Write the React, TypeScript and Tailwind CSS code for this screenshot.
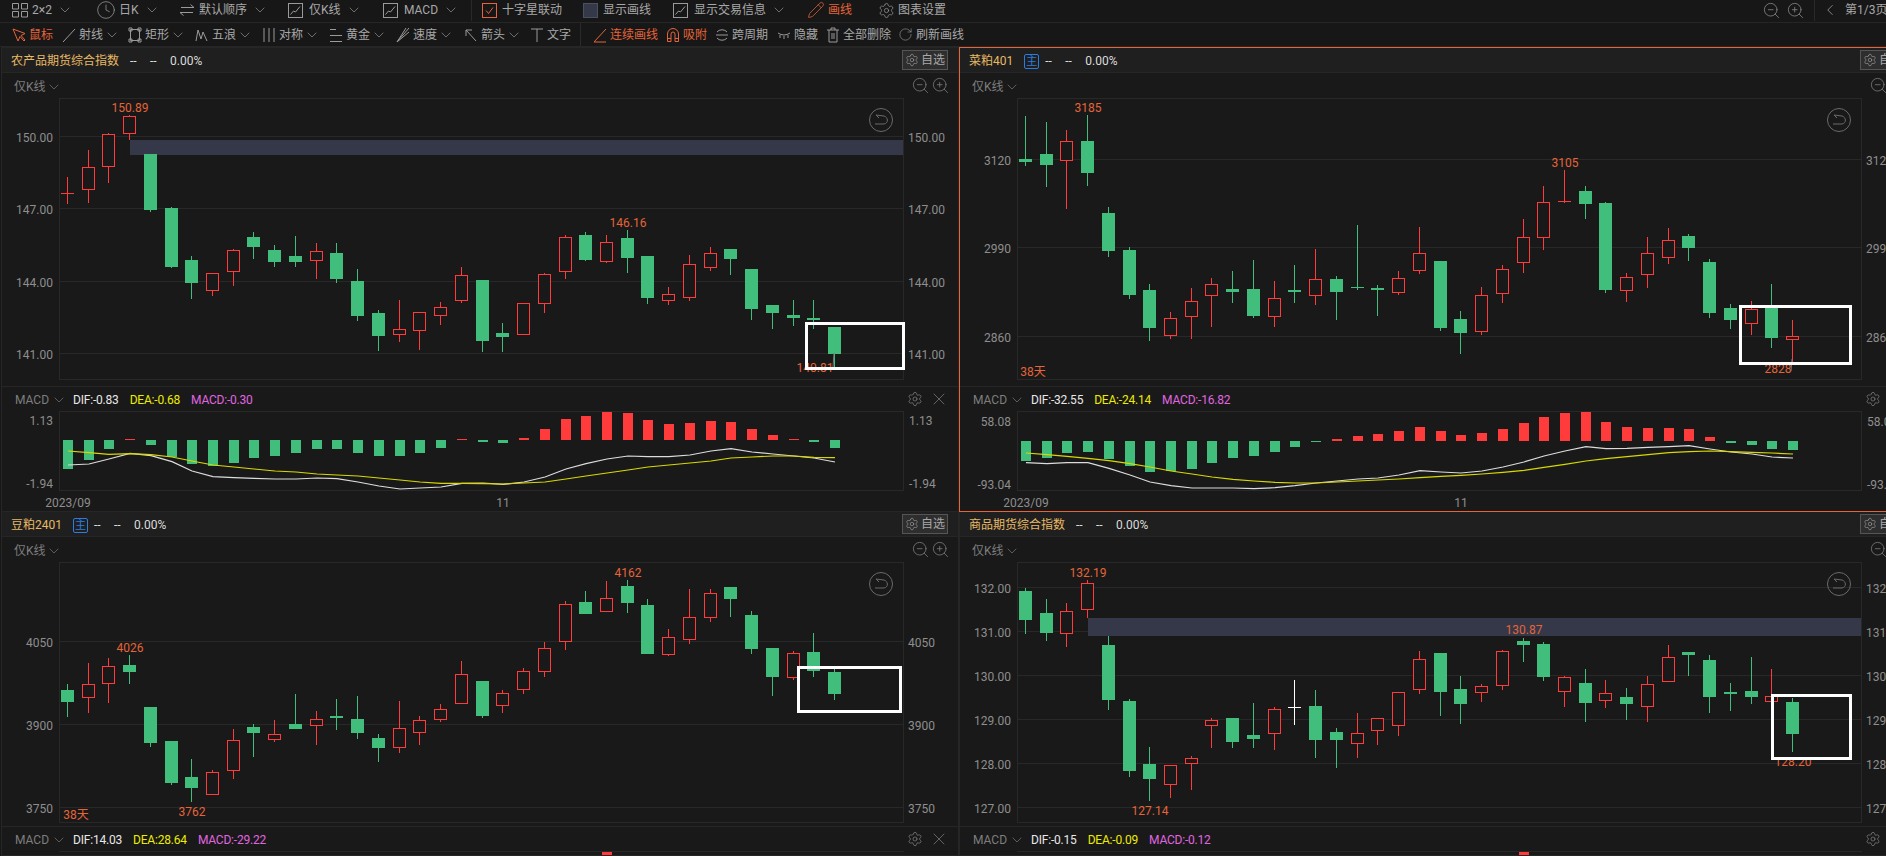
import type { ReactNode } from 'react'
import { ChevronDown, ChevronLeft, Clock, Pencil, RotateCw, Settings, X, ZoomIn, ZoomOut } from 'lucide-react'

type Candle = [string, number, number, number, number]
type Mark = [string, number, number]

const ORANGE = '#e5643a'
const GREEN = '#41bd7c'
const RED = '#ff3b3b'

// candle columns, the pixel step alternates between 20 and 21
const COLS = [65, 86, 106, 127, 148, 169, 189, 210, 231, 251, 272, 293, 314, 334, 355, 376, 397, 417, 438, 459, 480, 500, 521, 542, 563, 583, 604, 625, 645, 666, 687, 708, 728, 749, 770, 791, 811, 832]

// all candle values are y positions in the 3x zoom of the screenshot
const farmData: Candle[] = [
  ['r', 262, 342, 310, 310], ['r', 181, 339, 232, 296], ['r', 130, 279, 133, 227], ['r', 76, 150, 79, 128],
  ['g', 192, 366, 192, 360], ['g', 351, 534, 354, 531], ['g', 498, 627, 510, 579], ['r', 550, 618, 550, 599],
  ['r', 477, 588, 481, 542], ['g', 426, 507, 441, 471], ['g', 465, 531, 480, 516], ['g', 438, 531, 498, 516],
  ['r', 459, 567, 484, 509], ['g', 459, 579, 489, 567], ['g', 537, 693, 573, 678], ['g', 660, 783, 669, 738],
  ['r', 630, 756, 717, 731], ['r', 667, 780, 667, 719], ['r', 636, 705, 652, 674], ['r', 531, 639, 556, 629],
  ['g', 570, 786, 570, 753], ['g', 699, 786, 729, 741], ['r', 640, 735, 640, 731], ['r', 550, 669, 553, 638],
  ['r', 435, 567, 441, 542], ['g', 426, 513, 435, 510], ['r', 435, 519, 457, 513], ['g', 420, 549, 444, 504],
  ['g', 498, 642, 498, 624], ['r', 591, 645, 613, 629], ['r', 495, 633, 523, 620], ['r', 471, 543, 490, 530],
  ['g', 477, 555, 477, 507], ['g', 537, 690, 537, 657], ['g', 645, 717, 645, 669], ['g', 630, 708, 675, 684],
  ['g', 630, 717, 684, 690], ['g', 711, 830, 711, 792],
]

const rapeData: Candle[] = [
  ['g', 78, 228, 207, 216], ['g', 96, 291, 192, 225], ['r', 120, 357, 154, 209], ['g', 75, 288, 153, 249],
  ['g', 351, 501, 369, 483], ['g', 471, 627, 480, 615], ['g', 582, 753, 600, 714], ['r', 666, 747, 685, 734],
  ['r', 594, 747, 634, 677], ['r', 564, 711, 583, 614], ['g', 543, 639, 597, 606], ['g', 510, 684, 597, 678],
  ['r', 573, 711, 625, 677], ['g', 525, 639, 600, 606], ['r', 477, 645, 568, 614], ['g', 558, 690, 567, 606],
  ['g', 405, 600, 591, 594], ['g', 585, 678, 594, 600], ['r', 543, 615, 565, 605], ['r', 411, 552, 490, 539],
  ['g', 513, 723, 513, 714], ['g', 663, 792, 687, 729], ['r', 591, 735, 616, 722], ['r', 525, 639, 538, 608],
  ['r', 387, 549, 441, 515], ['r', 288, 480, 337, 440], ['r', 240, 339, 334, 334], ['g', 288, 387, 303, 342],
  ['g', 336, 609, 339, 600], ['r', 549, 636, 562, 599], ['r', 441, 594, 490, 551], ['r', 414, 522, 451, 500],
  ['g', 432, 513, 438, 474], ['g', 507, 684, 516, 669], ['g', 642, 717, 654, 690], ['r', 633, 735, 658, 698],
  ['g', 582, 774, 654, 744], ['r', 690, 815, 739, 748],
]

const soyData: Candle[] = [
  ['g', 522, 621, 540, 576], ['r', 459, 609, 523, 560], ['r', 444, 579, 469, 518], ['g', 435, 522, 465, 486],
  ['g', 591, 711, 591, 699], ['g', 693, 825, 693, 819], ['g', 747, 876, 801, 834], ['r', 781, 855, 787, 851],
  ['r', 657, 807, 691, 779], ['g', 642, 741, 651, 669], ['r', 630, 696, 673, 686], ['g', 552, 657, 642, 657],
  ['r', 603, 705, 628, 644], ['g', 567, 660, 618, 624], ['g', 558, 687, 627, 669], ['g', 672, 756, 684, 714],
  ['r', 573, 729, 655, 710], ['r', 618, 705, 631, 665], ['r', 582, 636, 598, 626], ['r', 453, 579, 493, 578],
  ['g', 513, 624, 513, 618], ['r', 540, 609, 550, 584], ['r', 474, 552, 484, 536], ['r', 396, 501, 415, 482],
  ['r', 273, 420, 283, 392], ['g', 243, 312, 276, 312], ['r', 213, 306, 265, 302], ['g', 210, 309, 228, 279],
  ['g', 267, 432, 285, 432], ['r', 357, 438, 382, 431], ['r', 237, 402, 322, 386], ['r', 237, 336, 250, 320],
  ['g', 231, 321, 231, 267], ['g', 303, 432, 315, 417], ['g', 414, 558, 414, 501], ['r', 423, 510, 430, 500],
  ['g', 369, 501, 426, 483], ['g', 477, 570, 486, 552],
]

const goodsData: Candle[] = [
  ['g', 234, 372, 243, 330], ['g', 267, 393, 309, 369], ['r', 279, 411, 304, 368], ['r', 210, 324, 220, 296],
  ['g', 378, 600, 405, 570], ['g', 567, 801, 573, 783], ['g', 711, 873, 762, 807], ['r', 766, 864, 766, 821],
  ['r', 738, 840, 745, 758], ['r', 625, 714, 631, 644], ['g', 624, 714, 624, 696], ['g', 579, 714, 675, 687],
  ['r', 591, 720, 598, 668], ['w', 510, 645, 590, 590], ['g', 540, 744, 588, 690], ['g', 654, 774, 666, 690],
  ['r', 609, 744, 670, 698], ['r', 625, 705, 625, 659], ['r', 547, 678, 547, 644], ['r', 423, 552, 448, 536],
  ['g', 429, 618, 429, 546], ['g', 498, 642, 537, 582], ['r', 522, 576, 529, 545], ['r', 420, 540, 424, 524],
  ['g', 384, 456, 393, 405], ['g', 396, 513, 402, 501], ['r', 498, 591, 502, 542], ['g', 477, 636, 519, 579],
  ['r', 510, 594, 550, 569], ['g', 534, 630, 561, 582], ['r', 498, 636, 523, 587], ['r', 405, 513, 442, 513],
  ['g', 426, 498, 426, 435], ['g', 435, 609, 450, 561], ['g', 519, 603, 546, 552], ['g', 441, 582, 543, 561],
  ['r', 477, 573, 559, 572], ['g', 564, 726, 576, 672],
]

const farmHist = [252, 225, 192, -162, 180, 215, 237, 243, 234, 219, 213, 204, 192, 192, 204, 213, 213, 204, 189, -162, 171, 174, -159, -132, -102, -93, -81, -84, -105, -117, -114, -108, -111, -132, -150, -162, 171, 189]
const farmDif = [240, 237, 222, 205, 212, 230, 258, 275, 278, 280, 282, 282, 279, 281, 291, 303, 312, 309, 306, 295, 294, 298, 291, 276, 252, 236, 222, 213, 215, 215, 210, 198, 191, 201, 207, 213, 219, 231]
const farmDea = [198, 203, 208, 206, 209, 216, 228, 240, 246, 252, 258, 261, 267, 270, 273, 279, 285, 291, 295, 295, 296, 297, 294, 291, 282, 273, 264, 255, 246, 240, 234, 228, 219, 216, 213, 213, 217, 218]
const rapeHist = [228, 219, 204, 201, 222, 243, 261, 258, 252, 234, 219, 213, 201, 186, 171, -162, -153, -147, -138, -126, -138, -150, -144, -132, -114, -96, -84, -81, -111, -126, -129, -129, -132, -156, 174, 180, 192, 195]
const rapeDif = [233, 236, 233, 233, 250, 270, 291, 302, 309, 309, 309, 311, 308, 302, 294, 288, 282, 279, 270, 257, 261, 264, 258, 246, 231, 213, 198, 185, 191, 190, 187, 185, 182, 192, 201, 207, 216, 219]
const rapeDea = [204, 209, 214, 220, 227, 236, 246, 258, 267, 276, 283, 288, 292, 294, 294, 291, 288, 285, 282, 278, 274, 271, 267, 262, 256, 247, 238, 228, 221, 215, 209, 203, 200, 198, 200, 202, 204, 207]

function ChartIcon() {
  return (
    <svg width="15" height="15" viewBox="0 0 15 15" fill="none" stroke="#9a9a9a" className="mr-[3px] shrink-0">
      <rect x="0.5" y="0.5" width="14" height="14" />
      <path d="M2.5 11.5 L5.5 8 L7.5 9 L12 3.5" />
    </svg>
  )
}

function Glyph({ d, color = '#9a9a9a' }: { d: string; color?: string }) {
  return (
    <svg width="14" height="16" viewBox="0 0 14 16" fill="none" stroke={color} className="shrink-0">
      <path d={d} />
    </svg>
  )
}

function Tool({ icon, label, chevron, tight, color, className }: { icon: ReactNode; label: string; chevron?: boolean; tight?: boolean; color?: string; className: string }) {
  return (
    <div className={`flex shrink-0 items-center ${className} ${color ?? 'text-[#a8a8a8]'}`}>
      {icon}
      <span className="ml-[3px] whitespace-nowrap">{label}</span>
      {chevron && <ChevronDown size={16} strokeWidth={1} className={`shrink-0 text-[#9a9a9a] ${tight ? 'ml-px' : 'ml-[5px]'}`} />}
    </div>
  )
}

function TopBar() {
  return (
    <div className="flex h-[23px] items-center border-b border-[#262626] pb-[2px] pl-[11px] text-[12px]">
      <Tool
        className="w-[85px]"
        icon={
          <svg width="18" height="16" viewBox="0 0 18 16" fill="none" stroke="#9a9a9a" className="shrink-0">
            <path d="M1.5 1.5H7.5V7H1.5ZM10.5 1.5H16.5V7H10.5ZM1.5 9.5H7.5V15H1.5ZM10.5 9.5H16.5V15H10.5Z" />
          </svg>
        }
        label="2×2"
        chevron
      />
      <Tool className="w-[82px]" icon={<Clock size={20} strokeWidth={0.9} className="text-[#9a9a9a]" />} label="日K" chevron />
      <Tool
        className="w-[110px]"
        icon={
          <svg width="18" height="16" viewBox="0 0 18 16" fill="none" stroke="#9a9a9a" className="shrink-0">
            <path d="M3 5.5H16L12.5 2.5M15 10.5H2L5.5 13.5" />
          </svg>
        }
        label="默认顺序"
        chevron
      />
      <Tool className="w-[95px]" icon={<ChartIcon />} label="仅K线" chevron />
      <Tool className="w-[88px]" icon={<ChartIcon />} label="MACD" chevron />
      <div className="mr-[10px] h-[22px] w-px shrink-0 bg-[#2a2a2a]" />
      <Tool
        className="w-[101px]"
        icon={
          <svg width="15" height="15" viewBox="0 0 15 15" fill="none" className="mr-[2px] shrink-0">
            <rect x="0.5" y="0.5" width="14" height="14" stroke={ORANGE} />
            <path d="M4 7.5 L6.5 10.5 L11 4.5" stroke={ORANGE} />
          </svg>
        }
        label="十字星联动"
      />
      <Tool className="w-[90px]" icon={<div className="mr-[2px] h-[15px] w-[15px] shrink-0 border border-[#4a5060] bg-[#343848]" />} label="显示画线" />
      <Tool className="w-[134px]" icon={<ChartIcon />} label="显示交易信息" chevron />
      <Tool className="w-[71px]" color="text-[#e5643a]" icon={<Pencil size={18} strokeWidth={1} />} label="画线" />
      <Tool className="w-[70px]" icon={<Settings size={17} strokeWidth={1} className="text-[#9a9a9a]" />} label="图表设置" />
      <ZoomOut size={19} strokeWidth={1} className="ml-[814px] shrink-0 text-[#8a8a8a]" />
      <ZoomIn size={19} strokeWidth={1} className="ml-[5px] shrink-0 text-[#8a8a8a]" />
      <div className="ml-[9px] h-[22px] w-px shrink-0 bg-[#2a2a2a]" />
      <ChevronLeft size={18} strokeWidth={1} className="ml-[6px] shrink-0 text-[#a8a8a8]" />
      <span className="ml-[6px] whitespace-nowrap text-[#a8a8a8]">第1/3页</span>
    </div>
  )
}

function DrawBar() {
  return (
    <div className="flex h-[24px] items-center border-b border-[#262626] pl-[12px] text-[12px]">
      <Tool className="w-[50px]" color="text-[#e5643a]" icon={<Glyph color={ORANGE} d="M1 2 L6 14 L8 9.5 L12 14 L13 13 L9 8.5 L13 6.5 Z" />} label="鼠标" />
      <Tool className="w-[66px]" tight icon={<Glyph d="M1 15 L13 2" />} label="射线" chevron />
      <Tool className="w-[67px]" tight icon={<Glyph d="M2.5 2.5H11.5V13.5H2.5ZM1 1H4V4H1ZM10 1H13V4H10ZM1 12H4V15H1ZM10 12H13V15H10Z" />} label="矩形" chevron />
      <Tool className="w-[67px]" tight icon={<Glyph d="M1 14 L3 3 L6 12 L8 5 L12 14" />} label="五浪" chevron />
      <Tool className="w-[67px]" tight icon={<Glyph d="M2 1V15M7 1V15M12 1V15" />} label="对称" chevron />
      <Tool className="w-[67px]" tight icon={<Glyph d="M1 2.5H7M1 8.5H13M1 14.5H13" />} label="黄金" chevron />
      <Tool className="w-[68px]" tight icon={<Glyph d="M1 15 L13 1M1 15 L13 5M1 15 L10 1" />} label="速度" chevron />
      <Tool className="w-[66px]" tight icon={<Glyph d="M12 14 L2 3M2 9V3H8" />} label="箭头" chevron />
      <Tool className="w-[50px]" icon={<Glyph d="M1 2H13M7 2V15" />} label="文字" />
      <div className="mr-[12px] h-[23px] w-px shrink-0 bg-[#2a2a2a]" />
      <Tool className="w-[73px]" color="text-[#e5643a]" icon={<Glyph color={ORANGE} d="M1 15 L13 2M1 15H13" />} label="连续画线" />
      <Tool className="w-[49px]" color="text-[#e5643a]" icon={<Glyph color={ORANGE} d="M1.5 14.5V7A5.5 5.5 0 0 1 12.5 7V14.5H9V7A2 2 0 0 0 5 7V14.5ZM1.5 11.5H5M9 11.5H12.5" />} label="吸附" />
      <Tool className="w-[62px]" icon={<Glyph d="M1 8H13M2 5 A6 5 0 0 1 12 5M2 11 A6 5 0 0 0 12 11" />} label="跨周期" />
      <Tool className="w-[49px]" icon={<Glyph d="M1 6 Q7 10 13 6M3 8V11M7 9V12M11 8V11" />} label="隐藏" />
      <Tool className="w-[72px]" icon={<Glyph d="M1 3H13M5 3V1H9V3M3 3V15H11V3M6 6V12M8 6V12" />} label="全部删除" />
      <Tool className="w-[70px]" icon={<RotateCw size={15} strokeWidth={1} className="text-[#9a9a9a]" />} label="刷新画线" />
    </div>
  )
}

function Plot({ data, base, height, frameBottom, grid, labels, band, box, tick }: {
  data: Candle[]
  base: number
  height: number
  frameBottom: number
  grid: [number, string][]
  labels: Mark[]
  band?: [number, number]
  box: [number, number, number, number]
  tick?: [number, number, number, number]
}) {
  const toY = (v: number) => Math.round(v / 3 + base)
  return (
    <svg width="956" height={height} className="block">
      <rect x="57.5" y="0.5" width="844" height={frameBottom} fill="none" stroke="#282828" />
      {grid.map(([y, text]) => (
        <g key={text}>
          <rect x="58" y={y} width="843" height="1" fill="#282828" />
          <text x="51" y={y + 2} textAnchor="end" dominantBaseline="central" fontSize="12" fill="#8e8e8e">{text}</text>
          <text x="906" y={y + 2} dominantBaseline="central" fontSize="12" fill="#8e8e8e">{text}</text>
        </g>
      ))}
      {band && <rect x="128" y={band[0]} width="773" height={band[1] - band[0]} fill="#343848" />}
      {data.map(([c, hi, lo, top, bot], i) => {
        const x = COLS[i]
        const color = c === 'g' ? GREEN : c === 'w' ? '#ffffff' : RED
        const t = toY(top)
        const b = toY(bot)
        return (
          <g key={i} shapeRendering="crispEdges">
            <rect x={x} y={toY(hi)} width="1" height={toY(lo) - toY(hi)} fill={color} />
            {c === 'g' && <rect x={x - 6} y={t} width="13" height={Math.max(b - t, 1)} fill={color} />}
            {c === 'r' && b - t > 0 && <rect x={x - 5.5} y={t + 0.5} width="12" height={b - t} fill="#191919" stroke={color} />}
            {c === 'r' && b === t && <rect x={x - 6} y={t} width="13" height="1" fill={color} />}
            {c === 'r' && b - t > 0 && <rect x={x} y={toY(hi)} width="1" height={Math.max(t - toY(hi), 0)} fill={color} />}
            {c === 'w' && <rect x={x - 6} y={t} width="13" height="1" fill={color} />}
          </g>
        )
      })}
      {labels.map(([text, x, y]) => (
        <text key={text} x={x} y={y + 1} textAnchor="middle" dominantBaseline="central" fontSize="12" fill={ORANGE}>{text}</text>
      ))}
      {tick && <line x1={tick[0]} y1={tick[1]} x2={tick[2]} y2={tick[3]} stroke="#777" />}
      <g transform="translate(879 22)" fill="none" stroke="#6a6a6a">
        <circle r="11.5" />
        <path d="M-5 -5 L3 -4 C7 -3 8 3 3 4 L-6 4 M-5 -5 L-2 -2" />
      </g>
      <rect x={box[0] + 1.5} y={box[1] + 1.5} width={box[2] - 3} height={box[3] - 3} fill="none" stroke="#ffffff" strokeWidth="3" />
    </svg>
  )
}

function MacdPlot({ hist, dif, dea, zero, top, bottom, hi, lo, mid }: {
  hist: number[]
  dif: number[]
  dea: number[]
  zero: number
  top: number
  bottom: number
  hi: string
  lo: string
  mid: number
}) {
  const toY = (v: number) => v / 3 - 26
  const line = (arr: number[]) => arr.map((v, i) => `${COLS[i] + 1},${toY(v)}`).join(' ')
  return (
    <svg width="956" height="99" className="block">
      <rect x="57.5" y="0.5" width="844" height="79" fill="none" stroke="#282828" />
      <text x="51" y={top + 1} textAnchor="end" dominantBaseline="central" fontSize="12" fill="#8e8e8e">{hi}</text>
      <text x="907" y={top + 1} dominantBaseline="central" fontSize="12" fill="#8e8e8e">{hi}</text>
      <text x="51" y={bottom + 1} textAnchor="end" dominantBaseline="central" fontSize="12" fill="#8e8e8e">{lo}</text>
      <text x="907" y={bottom + 1} dominantBaseline="central" fontSize="12" fill="#8e8e8e">{lo}</text>
      {hist.map((v, i) => {
        const y = Math.round(toY(Math.abs(v)))
        return v < 0 ? (
          <rect key={i} x={COLS[i] - 4} y={y} width="10" height={zero - y} fill={RED} />
        ) : (
          <rect key={i} x={COLS[i] - 4} y={zero} width="10" height={y - zero} fill={GREEN} />
        )
      })}
      <polyline points={line(dif)} fill="none" stroke="#dcdcdc" strokeWidth="1.2" />
      <polyline points={line(dea)} fill="none" stroke="#d8d800" strokeWidth="1.2" />
      <text x="66" y="92" textAnchor="middle" dominantBaseline="central" fontSize="12" fill="#8e8e8e">2023/09</text>
      <text x={mid} y="92" textAnchor="middle" dominantBaseline="central" fontSize="12" fill="#8e8e8e">11</text>
    </svg>
  )
}

function Panel({ name, main, dif, dea, macd, active, bottomRow, chart, children }: {
  name: string
  main?: boolean
  dif: string
  dea: string
  macd: string
  active?: boolean
  bottomRow?: boolean
  chart: ReactNode
  children: ReactNode
}) {
  return (
    <div className={`flex flex-col overflow-hidden border ${active ? 'border-[#e5643a]' : 'border-[#262626]'} ${bottomRow ? 'border-t-0' : ''} bg-[#191919]`}>
      <div className="flex h-[25px] shrink-0 items-center gap-[11px] border-b border-[#262626] bg-[#1f1f1f] pl-[9px] pr-[10px] pt-[2px] text-[12px]">
        <span className="text-[#e6b964]">{name}</span>
        {main && <span className="-mr-[5px] flex h-[15px] w-[15px] items-center justify-center rounded-[2px] border border-[#2b7de0] text-[11px] leading-none text-[#2b7de0]">主</span>}
        <span className="w-[9px] text-[#dcdcdc]">--</span>
        <span className="w-[9px] text-[#dcdcdc]">--</span>
        <span className="text-[#dcdcdc]">0.00%</span>
        <div className="ml-auto flex h-[20px] w-[46px] -translate-y-px items-center justify-center gap-[2px] border border-[#555555] bg-[#2e2e2e] text-[#a8a8a8]">
          <Settings size={14} strokeWidth={1} className="shrink-0" />
          <span className="whitespace-nowrap">自选</span>
        </div>
      </div>
      <div className="flex h-[25px] shrink-0 items-center pl-[12px] pr-[8px] pt-[2px] text-[12px] text-[#7e7e7e]">
        <span>仅K线</span>
        <ChevronDown size={16} strokeWidth={1} />
        <ZoomOut size={19} strokeWidth={1} className="ml-auto -translate-y-px" />
        <ZoomIn size={19} strokeWidth={1} className="ml-px -translate-y-px" />
      </div>
      {chart}
      <div className="flex h-[25px] shrink-0 items-center gap-[11px] border-t border-[#262626] pl-[13px] pr-[9px] pt-[2px] text-[12px]">
        <span className="-mr-[5px] flex items-center text-[#7e7e7e]">
          MACD
          <ChevronDown size={16} strokeWidth={1} className="ml-[2px]" />
        </span>
        <span className="tracking-[-0.2px] text-[#e8e8e8]">DIF:{dif}</span>
        <span className="tracking-[-0.2px] text-[#ecec00]">DEA:{dea}</span>
        <span className="tracking-[-0.2px] text-[#e066e0]">MACD:{macd}</span>
        <Settings size={16} strokeWidth={1} className="ml-auto -translate-y-px text-[#8a8a8a]" />
        <X size={20} strokeWidth={0.8} className="-ml-[5px] -translate-y-px text-[#8a8a8a]" />
      </div>
      {children}
    </div>
  )
}

function PeekBar({ x }: { x: number }) {
  // the next indicator is cut off by the window, only its frame and one red bar show
  return (
    <svg width="956" height="4" className="block">
      <rect x="57" y="0" width="845" height="1" fill="#282828" />
      <rect x={x} y="1" width="10" height="3" fill={RED} />
    </svg>
  )
}

export default function App() {
  return (
    <div className="h-screen w-full overflow-hidden bg-[#171717] [font-family:Roboto,'Noto_Sans_CJK_SC',sans-serif]">
      <TopBar />
      <DrawBar />
      <div className="grid w-[1917px] grid-cols-[958px_958px] grid-rows-[465px_344px] pl-px">
        <Panel
          name="农产品期货综合指数"
          dif="-0.83"
          dea="-0.68"
          macd="-0.30"
          chart={
            <Plot
              data={farmData}
              base={-8}
              height={288}
              frameBottom={281}
              grid={[[38, '150.00'], [110, '147.00'], [183, '144.00'], [255, '141.00']]}
              labels={[['150.89', 128, 9], ['146.16', 626, 124], ['140.81', 813, 269]]}
              band={[42, 57]}
              box={[803, 224, 100, 48]}
              tick={[832, 255, 831, 269]}
            />
          }
        >
          <MacdPlot hist={farmHist} dif={farmDif} dea={farmDea} zero={29} top={9} bottom={72} hi="1.13" lo="-1.94" mid={501} />
        </Panel>
        <Panel
          name="菜粕401"
          main
          dif="-32.55"
          dea="-24.14"
          macd="-16.82"
          active
          chart={
            <Plot
              data={rapeData}
              base={-8}
              height={288}
              frameBottom={281}
              grid={[[61, '3120'], [149, '2990'], [238, '2860']]}
              labels={[['3185', 128, 9], ['3105', 605, 64], ['2828', 818, 270], ['38天', 73, 273]]}
              box={[779, 207, 113, 60]}
              tick={[832, 261, 831, 273]}
            />
          }
        >
          <MacdPlot hist={rapeHist} dif={rapeDif} dea={rapeDea} zero={30} top={10} bottom={73} hi="58.08" lo="-93.04" mid={501} />
        </Panel>
        <Panel
          name="豆粕2401"
          main
          bottomRow
          dif="14.03"
          dea="28.64"
          macd="-29.22"
          chart={
            <Plot
              data={soyData}
              base={-52}
              height={267}
              frameBottom={260}
              grid={[[79, '4050'], [162, '3900'], [245, '3750']]}
              labels={[['4026', 128, 85], ['3762', 190, 249], ['38天', 74, 252], ['4162', 626, 10]]}
              box={[795, 104, 105, 47]}
            />
          }
        >
          <PeekBar x={600} />
        </Panel>
        <Panel
          name="商品期货综合指数"
          bottomRow
          dif="-0.15"
          dea="-0.09"
          macd="-0.12"
          chart={
            <Plot
              data={goodsData}
              base={-52}
              height={267}
              frameBottom={260}
              grid={[[25, '132.00'], [69, '131.00'], [113, '130.00'], [157, '129.00'], [201, '128.00'], [245, '127.00']]}
              labels={[['132.19', 128, 10], ['127.14', 190, 248], ['130.87', 564, 67], ['128.20', 833, 199]]}
              band={[56, 74]}
              box={[811, 132, 81, 66]}
            />
          }
        >
          <PeekBar x={559} />
        </Panel>
      </div>
    </div>
  )
}
